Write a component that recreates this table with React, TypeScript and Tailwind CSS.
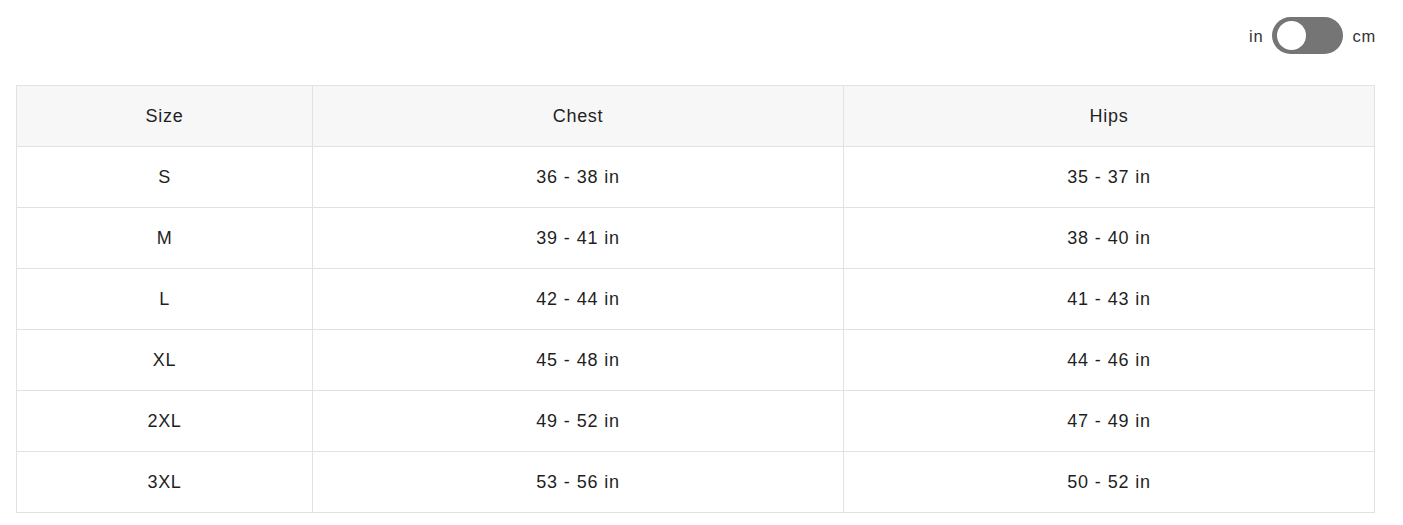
const rows = [
  ["S", "36 - 38 in", "35 - 37 in"],
  ["M", "39 - 41 in", "38 - 40 in"],
  ["L", "42 - 44 in", "41 - 43 in"],
  ["XL", "45 - 48 in", "44 - 46 in"],
  ["2XL", "49 - 52 in", "47 - 49 in"],
  ["3XL", "53 - 56 in", "50 - 52 in"],
];

export default function App() {
  return (
    <div className="bg-white pl-4 pr-[27px] pt-[17px] font-['Liberation_Sans',Arial,sans-serif] text-[#1f1f1f]">
      {/* Unit toggle */}
      <div className="flex items-center justify-end gap-[9px] text-[16.5px] tracking-[0.8px] text-[#333]">
        <span className="pt-[1px]">in</span>
        <button className="relative h-[37px] w-[71px] rounded-full bg-[#757575]">
          <span className="absolute left-[5px] top-[4px] h-[29px] w-[29px] rounded-full bg-white" />
        </button>
        <span className="pt-[1px]">cm</span>
      </div>

      {/* Size chart */}
      <table className="mt-[31px] w-[1359px] border-collapse text-center text-[18px] tracking-[0.7px] [word-spacing:0.5px]">
        <thead>
          <tr className="bg-[#f7f7f7]">
            <th className="h-[61px] w-[296px] border border-[#e2e2e2] pt-[1px] font-normal">Size</th>
            <th className="h-[61px] border border-[#e2e2e2] pt-[1px] font-normal">Chest</th>
            <th className="h-[61px] w-[531px] border border-[#e2e2e2] pt-[1px] font-normal">Hips</th>
          </tr>
        </thead>
        <tbody>
          {rows.map((r) => (
            <tr key={r[0]}>
              {r.map((c, i) => (
                <td key={i} className="h-[61px] border border-[#e2e2e2] pt-[1px]">{c}</td>
              ))}
            </tr>
          ))}
        </tbody>
      </table>
    </div>
  );
}
